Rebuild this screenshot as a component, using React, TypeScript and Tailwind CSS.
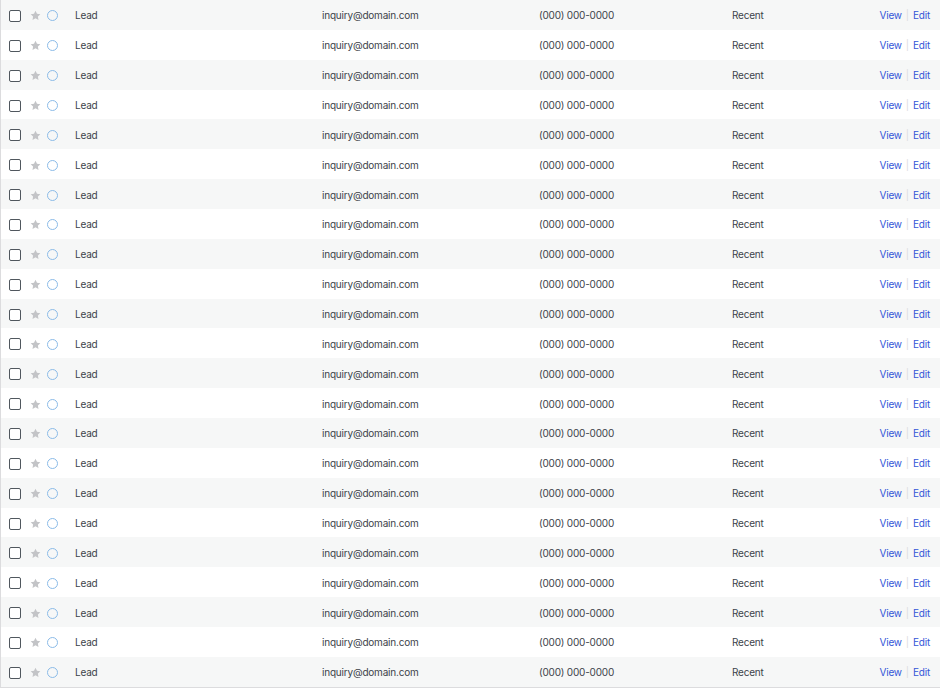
import React from 'react';

interface LeadRow {
  id: number;
  name: string;
  email: string;
  phone: string;
  status: string;
}

const ROWS: LeadRow[] = Array.from({ length: 23 }, (_, i) => ({
  id: i + 1,
  name: 'Lead',
  email: 'inquiry@domain.com',
  phone: '(000) 000-0000',
  status: 'Recent',
}));

const Star = () => (
  <svg viewBox="0 0 20 20" className="w-[11px] h-[11px]" fill="#c3c4c7">
    <path d="M10 1.2l2.7 5.6 6.1.9-4.4 4.3 1 6.1L10 15.2l-5.4 2.9 1-6.1L1.2 7.7l6.1-.9z" />
  </svg>
);

export default function App() {
  return (
    <div className="w-[940px] bg-white" style={{ fontFamily: 'Inter, "Noto Sans", sans-serif' }}>
      <div className="border-l border-b border-[#dcdcde]">
        {ROWS.map((row, i) => (
          <div
            key={row.id}
            className={`h-[29.87px] pt-[2px] flex items-center text-[10px] tracking-[-0.02em] text-[#3c434a] ${i % 2 === 0 ? 'bg-[#f6f7f7]' : 'bg-white'}`}
          >
            <div className="w-[74px] flex items-center pl-[8px]">
              <span className="w-[12px] h-[12px] border-[1.5px] border-[#50575e] rounded-[2px] bg-white" />
              <span className="ml-[9px] flex"><Star /></span>
              <span className="ml-[6px] w-[11px] h-[11px] rounded-full border-[1.5px] border-[#8bbbe8]" />
            </div>
            <div className="w-[247px]">{row.name}</div>
            <div className="w-[217px]">{row.email}</div>
            <div className="w-[193px]">{row.phone}</div>
            <div className="flex-1">{row.status}</div>
            <div className="pr-[10px] flex items-center text-[#3456d8]">
              <a href="#">View</a>
              <span className="mx-[4px] text-[#dcdcde]">|</span>
              <a href="#">Edit</a>
            </div>
          </div>
        ))}
      </div>
    </div>
  );
}
